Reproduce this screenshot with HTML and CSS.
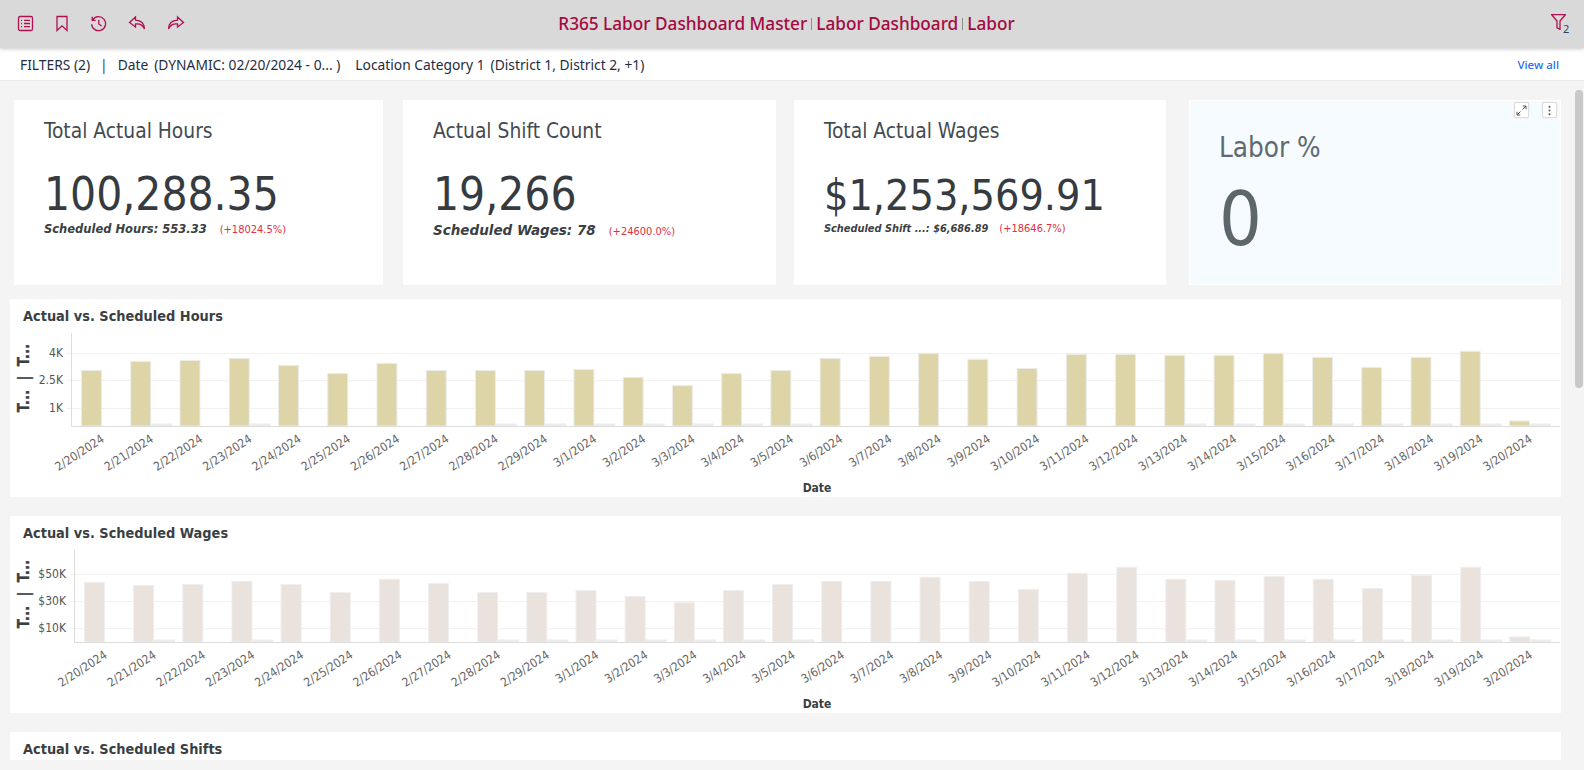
FILE: index.html
```html
<!DOCTYPE html>
<html lang="en">
<head>
<meta charset="utf-8">
<title>R365 Labor Dashboard</title>
<link rel="stylesheet" href="styles.css">
</head>
<body>
<header class="topbar">
  <div class="tools">
    <svg class="ico" width="17" height="17" viewBox="0 0 17 17"><rect x="1.5" y="1.5" width="14" height="14" rx="1.5"/><path d="M7 5.3h6M7 8.5h6M7 11.7h6M4 5.3h1M4 8.5h1M4 11.7h1"/></svg>
    <svg class="ico" width="14" height="17" viewBox="0 0 14 17"><path d="M2 1.5h10v14L7 10.8 2 15.5z"/></svg>
    <svg class="ico" width="17" height="17" viewBox="0 0 17 17"><path d="M2.6 5A7 7 0 1 1 1.6 9.2M2.2 1.8V5.300h3.500M8.800 4.800V9l2.800 2"/></svg>
    <svg class="ico" width="18" height="17" viewBox="0 0 18 17"><path d="M7.500 2 1.500 7.500 7.500 12V9c3.500-.5 7 .8 9 5-.2-5-3.500-8.500-9-8.800z"/></svg>
    <svg class="ico" width="18" height="17" viewBox="0 0 18 17"><path d="M10.500 2l6 5.500-6 4.500V9c-3.500-.5-7 .8-9 5 .2-5 3.500-8.500 9-8.800z"/></svg>
  </div>
  <h1 class="crumbs"><span>R365 Labor Dashboard Master</span><i class="sep"></i><span>Labor Dashboard</span><i class="sep"></i><span>Labor</span></h1>
  <div class="funnel">
    <svg class="ico" width="15" height="16" viewBox="0 0 15 16"><path d="M.7.700h13.600L9 7v8.300L6 13.800V7z"/></svg>
    <span class="funnel-n">2</span>
  </div>
</header>

<nav class="filters">
  <span>FILTERS (2)</span>
  <span class="bar">|</span>
  <span class="f-name">Date</span>
  <span class="f-val">(DYNAMIC: 02/20/2024 - 0... )</span>
  <span class="f-name f-gap">Location Category 1</span>
  <span class="f-val">(District 1, District 2, +1)</span>
  <a class="viewall">View all</a>
</nav>

<main class="content">
  <section class="kpis">
    <article class="kpi kpi-a">
      <h2>Total Actual Hours</h2>
      <div class="val">100,288.35</div>
      <div class="sub"><b class="s-12">Scheduled Hours: 553.33</b><span class="delta">(+18024.5%)</span></div>
    </article>
    <article class="kpi kpi-b">
      <h2>Actual Shift Count</h2>
      <div class="val">19,266</div>
      <div class="sub"><b class="s-14">Scheduled Wages: 78</b><span class="delta">(+24600.0%)</span></div>
    </article>
    <article class="kpi kpi-c">
      <h2>Total Actual Wages</h2>
      <div class="val">$1,253,569.91</div>
      <div class="sub"><b class="s-11">Scheduled Shift ...: $6,686.89</b><span class="delta">(+18646.7%)</span></div>
    </article>
    <article class="kpi kpi-d">
      <div class="actions">
        <button class="act"><svg width="11" height="11" viewBox="0 0 11 11"><path d="M6.500 4.500 10 1M6.800 1H10v3.200M4.500 6.500 1 10M1 6.800V10h3.200"/></svg></button>
        <button class="act"><svg width="11" height="11" viewBox="0 0 11 11"><circle cx="5.500" cy="1.800" r="1"/><circle cx="5.500" cy="5.500" r="1"/><circle cx="5.500" cy="9.200" r="1"/></svg></button>
      </div>
      <h2>Labor %</h2>
      <div class="val">0</div>
    </article>
  </section>

  <section class="panel panel-1">
    <h3>Actual vs. Scheduled Hours</h3>
    <svg class="chart" id="chart-hours" width="1551" height="165"></svg>
  </section>
  <section class="panel panel-2">
    <h3>Actual vs. Scheduled Wages</h3>
    <svg class="chart" id="chart-wages" width="1551" height="164"></svg>
  </section>
  <section class="panel panel-3">
    <h3>Actual vs. Scheduled Shifts</h3>
  </section>
  <div class="thumb"></div>
</main>
<script src="chart.js"></script>
</body>
</html>
```
FILE: styles.css
```css
* { box-sizing: border-box; }
html, body { margin: 0; height: 770px; overflow: hidden; }
body {
  display: flex;
  flex-direction: column;
  background: #f4f4f4;
  font-family: "Open Sans", "Noto Sans", sans-serif;
  color: #2b3a4d;
}

/* top bar */
.topbar {
  position: relative;
  z-index: 2;
  flex: 0 0 48px;
  display: flex;
  align-items: center;
  background: #d9d9d9;
  box-shadow: 0 1px 4px rgba(0, 0, 0, .22);
}
.tools { display: flex; align-items: center; gap: 21px; padding: 0 0 1px 17px; width: 200px; }
.ico { flex: none; fill: none; stroke: #b0104f; stroke-width: 1.300; }
.crumbs {
  flex: 1;
  margin: 0;
  padding: 0 124px 2px 0;
  display: flex;
  justify-content: center;
  align-items: center;
  font: 500 17.200px "Noto Sans", "Open Sans", sans-serif;
  color: #a30a41;
}
.sep { width: 1px; height: 12px; margin: 2px 4px 0; background: #8f8f8f; }
.funnel { width: 87px; padding-left: 54px; display: flex; align-items: flex-start; height: 20px; }
.funnel-n { font: 11px "Noto Sans", sans-serif; color: #33415c; margin: 7px 0 0 -3px; }

/* filter bar */
.filters {
  flex: 0 0 33px;
  display: flex;
  align-items: center;
  padding: 1px 25px 0 20px;
  background: #fff;
  border-bottom: 1px solid #ececec;
  font: 13.800px "Noto Sans", "Open Sans", sans-serif;
  color: #1f2d42;
}
.bar { margin: 0 10px 0 10px; color: #1d4477; }
.f-val { margin-left: 6px; }
.f-gap { margin-left: 15px; }
.viewall { margin-left: auto; font-size: 11.500px; font-weight: 500; color: #2a6df0; }

/* content */
.content { position: relative; flex: 1; padding: 19px 0 0 10px; overflow: hidden; }
.kpis { display: flex; height: 185px; margin: 0 0 14px 4px; }
.kpi { position: relative; background: #fff; padding: 17px 0 0 30px; font-family: "DejaVu Sans Condensed", "DejaVu Sans", sans-serif; }
.kpi-a { width: 369px; margin-right: 20px; }
.kpi-b { width: 373px; margin-right: 18px; }
.kpi-c { width: 372px; margin-right: 23px; }
.kpi-d { width: 372px; background: #f6fbff; border: 1px solid #fff; padding: 31px 0 0 29px; }
.kpi h2 { margin: 0; font-size: 20.800px; font-weight: 400; line-height: 28px; color: #444b50; }
.kpi .val { margin-top: 23px; font-size: 45.600px; line-height: 54px; color: #363b3f; }
.kpi-c .val { font-size: 42.700px; }
.kpi-d h2 { font-size: 27.600px; line-height: 32px; color: #5f6a70; }
.kpi-d .val { margin-top: 11px; font-size: 75px; line-height: 88px; color: #5c666b; }
.sub { display: flex; align-items: baseline; height: 18px; color: #3a3f44; }
.sub b { font-family: "DejaVu Sans", sans-serif; font-style: italic; font-weight: 700; }
.s-11 { font-size: 9.800px; }
.s-12 { font-size: 11.500px; }
.s-14 { font-size: 13.500px; }
.delta { margin-left: 13px; font-size: 11px; color: #e0303f; }
.kpi-c .delta { margin-left: 11px; }
.actions { position: absolute; top: 1px; right: 3px; display: flex; gap: 13px; }
.act {
  display: flex;
  align-items: center;
  justify-content: center;
  width: 15px;
  height: 16px;
  padding: 0;
  background: #fff;
  border: 1px solid #ddd;
  border-radius: 2px;
  box-shadow: 0 0 1px rgba(0, 0, 0, .2);
}
.act svg { fill: none; stroke: #555; stroke-width: 1; }
.act svg circle { fill: #555; stroke: none; }

/* panels */
.panel { width: 1551px; background: #fff; overflow: hidden; font-family: "DejaVu Sans Condensed", "DejaVu Sans", sans-serif; }
.panel h3 { margin: 0; height: 33px; padding: 8px 0 0 13px; font-size: 14.400px; line-height: 18px; font-weight: 700; color: #3a3f44; }
.panel-1 { height: 198px; margin-bottom: 19px; }
.panel-2 { height: 197px; margin-bottom: 19px; }
.panel-3 { height: 28px; }
.chart { display: block; }
.grid { stroke: #f1f1f1; stroke-width: 1; }
.axis { stroke: #dcdcdc; stroke-width: 1; fill: none; }
.tick { font-size: 12px; fill: #555; text-anchor: end; }
.xlab { font-size: 12px; fill: #666; text-anchor: end; }
.ttl { font-size: 12px; font-weight: 700; fill: #3a3f44; text-anchor: middle; white-space: pre; }
.ytl { font-size: 15px; font-weight: 700; fill: #3a3f44; stroke: #3a3f44; stroke-width: .3; text-anchor: middle; white-space: pre; }
.b-hours { fill: #ddd5a8; stroke: #ececec; }
.b-wages { fill: #eae2dd; stroke: #f0eeee; }
.b-mini { fill: #ececec; }

/* scrollbar thumb lies over the content */
.thumb { position: absolute; top: 9px; right: 1px; width: 8px; height: 298px; border-radius: 4px; background: #c8c8c8; }
```
FILE: chart.js
```js
var NS = 'http://www.w3.org/2000/svg';
var dates = [];
for (var d = 20; d <= 29; d++) dates.push('2/' + d + '/2024');
for (var m = 1; m <= 20; m++) dates.push('3/' + m + '/2024');

function el(parent, name, attrs, text) {
  var e = document.createElementNS(NS, name);
  for (var k in attrs) e.setAttribute(k, attrs[k]);
  if (text) e.textContent = text;
  parent.appendChild(e);
  return e;
}

function draw(o) {
  var s = document.getElementById(o.id);
  o.grid.forEach(function (g) {
    el(s, 'line', { 'class': 'grid', x1: o.ax - 4, x2: 1550, y1: g[0] + .5, y2: g[0] + .5 });
    el(s, 'text', { 'class': 'tick', x: o.ax - 8, y: g[0] + 4 }, g[1]);
  });
  o.h.forEach(function (h, i) {
    var x = o.x0 + i * o.step;
    el(s, 'rect', { 'class': o.cls, x: x + .5, y: o.base - h, width: o.bw, height: h });
    if (o.mini.indexOf(i) >= 0) {
      el(s, 'rect', { 'class': 'b-mini', x: x + o.bw + 1, y: o.base - 2.500, width: 21, height: 2.500 });
    }
    var lx = x + 24, ly = o.base + 15;
    el(s, 'text', { 'class': 'xlab', x: lx, y: ly, transform: 'rotate(-33 ' + lx + ' ' + ly + ')' }, dates[i]);
  });
  el(s, 'path', { 'class': 'axis', d: 'M' + (o.ax + .5) + ' 1V' + (o.base + .5) + 'H1550' });
  el(s, 'text', { 'class': 'ttl', x: 807, y: o.base + 66 }, 'Date');
  var tx = 19, ty = o.base - 48;
  el(s, 'text', { 'class': 'ytl', x: tx, y: ty, transform: 'rotate(-90 ' + tx + ' ' + ty + ')' }, 'T...  |  T...');
}

/* bar tops as read from the reference */
var hoursTop = [367, 358, 357, 355, 362, 370, 360, 367, 367, 367, 366, 374, 382, 370, 367, 355, 353, 350, 356, 365, 351, 351, 352, 352, 350, 354, 364, 354, 348, 417];
var wagesTop = [576, 579, 578, 575, 578, 586, 573, 577, 586, 586, 584, 590, 596, 584, 578, 575, 575, 571, 575, 583, 567, 561, 573, 574, 570, 573, 582, 569, 561, 630];
var mini = [1, 3, 8, 9, 10, 11, 12, 13, 14, 22, 23, 24, 25, 26, 27, 28, 29];

draw({
  id: 'chart-hours', cls: 'b-hours', ax: 61, x0: 71, step: 49.24, bw: 20, base: 94, mini: mini,
  grid: [[21, '4K'], [48, '2.5K'], [76, '1K']],
  h: hoursTop.map(function (t) { return (422 - t) * 1.0102; })
});
draw({
  id: 'chart-wages', cls: 'b-wages', ax: 64, x0: 74, step: 49.15, bw: 20, base: 93, mini: mini,
  grid: [[25, '$50K'], [52, '$30K'], [79, '$10K']],
  h: wagesTop.map(function (t) { return (635 - t) * 1.0102; })
});
```
